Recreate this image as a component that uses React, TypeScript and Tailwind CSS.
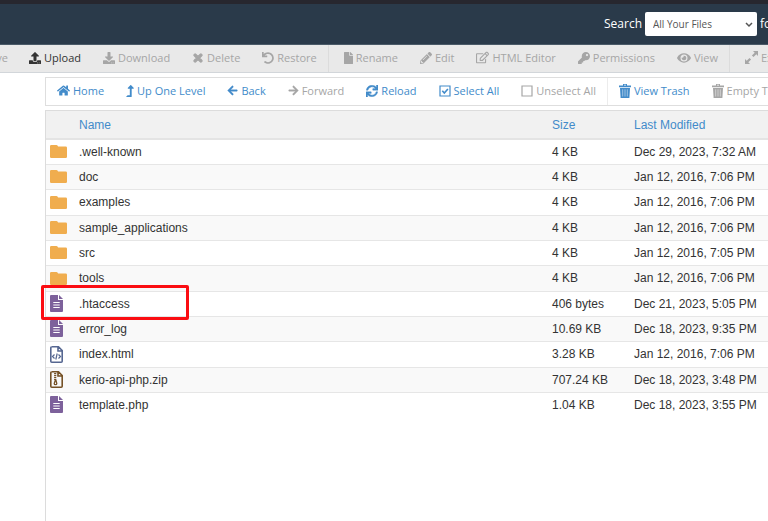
import type { ReactNode } from "react";
import {
  FaUpload, FaDownload, FaUndo, FaFile, FaPencilAlt, FaKey, FaEye, FaLevelUpAlt,
  FaArrowLeft, FaArrowRight, FaSync, FaRegEdit, FaHome, FaTimes,
} from "react-icons/fa";

const Trash = () => (
  <svg viewBox="0 0 12 14" className="h-[14px] w-3" fill="currentColor" aria-hidden="true">
    <path fillRule="evenodd" d="M4 0h4v1.500h4v1.700H0V1.500h4zM5 .8v.8h2V.8z" />
    <path d="M1 4h10l-.6 10H1.600z" />
    <path d="M3.700 5.300v7.200M6 5.300v7.200M8.300 5.300v7.200" stroke="#fff" strokeWidth=".7" opacity=".7" />
  </svg>
);

const Checkbox = ({ checked }: { checked?: boolean }) => (
  <svg viewBox="0 0 12 12" className="size-3" fill="none" stroke="currentColor" aria-hidden="true">
    <path d="M1 1h10v10H1z" strokeWidth="1.200" />
    {checked && <path d="M3.300 5.800l2 2.200 3.600-4" strokeWidth="1.600" />}
  </svg>
);

const Expand = () => (
  <svg viewBox="0 0 13 13" className="size-[13px]" fill="currentColor" aria-hidden="true">
    <path d="M8 0h5v5l-1.700-1.700-2.800 2.800-1.600-1.600 2.800-2.800zM5 13H0V8l1.700 1.700 2.800-2.800 1.600 1.600-2.800 2.800z" />
  </svg>
);

const Folder = () => (
  <svg viewBox="0 0 17 13" className="h-[13px] w-[17px]" fill="#f0ad4e" aria-hidden="true">
    <path d="M1.300 0h5.200q.6 0 1 .6l.6 .9h7.600Q17 1.500 17 2.800v8.900q0 1.300-1.300 1.300H1.300Q0 13 0 11.700V1.300Q0 0 1.300 0z" />
  </svg>
);

const TextFile = () => (
  <svg viewBox="0 0 13 17" className="h-[17px] w-[13px]" aria-hidden="true">
    <path d="M1 0h7v5h5v11q0 1-1 1H1q-1 0-1-1V1q0-1 1-1zM9 0l4 4H9z" fill="#7d619b" />
    <path d="M3.300 7.500h6.400M3.300 10h6.400M3.300 12.500h6.400" stroke="#fff" strokeWidth="1.100" />
  </svg>
);

const HtmlFile = () => (
  <svg viewBox="0 0 13 17" className="h-[17px] w-[13px]" fill="none" stroke="#566791" aria-hidden="true">
    <path d="M1.700.8h6.800l3.700 3.700v10.700q0 1-1 1H1.800q-1 0-1-1V1.800q0-1 1-1zM8 1v4h4" strokeWidth="1.600" />
    <path d="M4.500 8.500l-2 2 2 2M8.500 8.500l2 2-2 2M7.200 7.500l-1.400 6" strokeWidth="1.200" />
  </svg>
);

const ZipFile = () => (
  <svg viewBox="0 0 13 17" className="h-[17px] w-[13px]" fill="none" stroke="#755126" aria-hidden="true">
    <path d="M1.700.8h6.800l3.700 3.700v10.700q0 1-1 1H1.800q-1 0-1-1V1.800q0-1 1-1zM8 1v4h4" strokeWidth="1.600" />
    <path d="M5.200 2v7" strokeWidth="2.200" strokeDasharray="1.200 .8" />
    <path d="M5.200 9.500l-1 3q0 1.200 1.300 1.200t1.300-1.200l-.8-3z" strokeWidth="1.300" />
  </svg>
);

type Item = { label: string; icon?: ReactNode; active?: boolean; divider?: boolean };

const mainTools: Item[] = [
  { label: "Upload", icon: <FaUpload size={12} />, active: true },
  { label: "Download", icon: <FaDownload size={12} /> },
  { label: "Delete", icon: <FaTimes size={12} stroke="currentColor" strokeWidth={50} /> },
  { label: "Restore", icon: <FaUndo size={12} />, divider: true },
  { label: "Rename", icon: <FaFile size={12} className="w-[9px]" /> },
  { label: "Edit", icon: <FaPencilAlt size={12} /> },
  { label: "HTML Editor", icon: <FaRegEdit size={13} /> },
  { label: "Permissions", icon: <FaKey size={12} /> },
  { label: "View", icon: <FaEye size={14} />, divider: true },
  { label: "Extract", icon: <Expand /> },
];

const navTools: Item[] = [
  { label: "Home", icon: <FaHome size={13} />, active: true },
  { label: "Up One Level", icon: <FaLevelUpAlt size={12} className="w-2" />, active: true },
  { label: "Back", icon: <FaArrowLeft size={11} stroke="currentColor" strokeWidth={16} />, active: true },
  { label: "Forward", icon: <FaArrowRight size={11} stroke="currentColor" strokeWidth={16} /> },
  { label: "Reload", icon: <FaSync size={12} stroke="currentColor" strokeWidth={16} />, active: true },
  { label: "Select All", icon: <Checkbox checked />, active: true },
  { label: "Unselect All", icon: <Checkbox />, divider: true },
  { label: "View Trash", icon: <Trash />, active: true },
  { label: "Empty Trash", icon: <Trash /> },
];

const files = [
  [".well-known", "4 KB", "Dec 29, 2023, 7:32 AM", "dir"],
  ["doc", "4 KB", "Jan 12, 2016, 7:06 PM", "dir"],
  ["examples", "4 KB", "Jan 12, 2016, 7:06 PM", "dir"],
  ["sample_applications", "4 KB", "Jan 12, 2016, 7:06 PM", "dir"],
  ["src", "4 KB", "Jan 12, 2016, 7:05 PM", "dir"],
  ["tools", "4 KB", "Jan 12, 2016, 7:06 PM", "dir"],
  [".htaccess", "406 bytes", "Dec 21, 2023, 5:05 PM", "text"],
  ["error_log", "10.69 KB", "Dec 18, 2023, 9:35 PM", "text"],
  ["index.html", "3.28 KB", "Jan 12, 2016, 7:06 PM", "html"],
  ["kerio-api-php.zip", "707.24 KB", "Dec 18, 2023, 3:48 PM", "zip"],
  ["template.php", "1.04 KB", "Dec 18, 2023, 3:55 PM", "text"],
];

const icons: Record<string, ReactNode> = { dir: <Folder />, text: <TextFile />, html: <HtmlFile />, zip: <ZipFile /> };

function Tool({ item, activeClass, dividerClass }: { item: Item; activeClass: string; dividerClass: string }) {
  return (
    <button
      type="button"
      disabled={!item.active}
      className={`flex shrink-0 items-center gap-[3px] px-[11px] pb-0.5 ${item.active ? activeClass : "text-[#a6a6a6]"} ${item.divider ? dividerClass : ""}`}
    >
      {item.icon}
      <span>{item.label}</span>
    </button>
  );
}

export default function App() {
  return (
    <div className="flex min-h-screen flex-col overflow-hidden bg-white font-['Open_Sans',sans-serif] text-[11px] leading-4 whitespace-nowrap">
      <header className="flex h-[45px] items-center justify-end overflow-hidden border-t-4 border-b border-t-[#27272f] border-b-[#4a5a68] bg-[#2a3a4a] text-[12px] text-white">
        <label htmlFor="scope" className="mr-[3px]">Search</label>
        <div className="relative">
          <select id="scope" className="h-6 w-[112px] appearance-none rounded-xs bg-white pl-2 text-[10px] text-[#555]">
            <option>All Your Files</option>
          </select>
          <svg viewBox="0 0 8 6" className="pointer-events-none absolute top-[10px] right-1 h-[6px] w-2" fill="none" stroke="#555" strokeWidth="1.500" aria-hidden="true">
            <path d="M1 1l3 3 3-3" />
          </svg>
        </div>
        <span className="ml-[3px] w-2 overflow-hidden">for</span>
      </header>

      <nav aria-label="File actions" className="flex h-7 overflow-hidden border-b border-[#d2d6da] bg-[#e9e9e9]">
        <button type="button" disabled className="flex w-[18px] shrink-0 items-center justify-end pr-[10px] pb-0.5 text-[#a6a6a6]">ve</button>
        {mainTools.map((t) => <Tool key={t.label} item={t} activeClass="text-[#333]" dividerClass="mr-1 border-r border-[#dcdcdc]" />)}
      </nav>

      <main className="flex grow flex-col gap-1 pt-1 pl-[45px]">
        <nav aria-label="Navigation" className="flex h-[29px] overflow-hidden border border-r-0 border-[#dedede]">
          {navTools.map((t) => <Tool key={t.label} item={t} activeClass="text-[#428bca]" dividerClass="border-r border-[#ececec]" />)}
        </nav>
        <section className="grow border-t border-l border-[#dcdcdc] font-['Liberation_Sans',Arial,sans-serif]">
          <table className="w-full table-fixed border-collapse text-left text-[12px] text-[#333]">
            <thead>
              <tr className="h-7 border-b-2 border-[#e4e4e4] bg-[#f1f1f1] text-[#428bca]">
                <th className="w-[33px]"><span className="sr-only">Type</span></th>
                <th className="font-normal">Name</th>
                <th className="w-[82px] font-normal">Size</th>
                <th className="w-[134px] font-normal">Last Modified</th>
              </tr>
            </thead>
            <tbody>
              {files.map(([name, size, date, type]) => (
                <tr key={name} className="h-[25px] border-b border-[#e6e6e6] last:border-0 odd:bg-white even:bg-[#f9f9f9] nth-[3n]:h-[26px]">
                  <td className="pl-1">{icons[type]}</td>
                  <td>
                    {name === ".htaccess" ? (
                      <span className="relative">
                        {name}
                        <span className="pointer-events-none absolute -top-3 -left-[38px] h-[35px] w-[148px] rounded-xs border-3 border-[#fb0d12]" />
                      </span>
                    ) : name}
                  </td>
                  <td>{size}</td>
                  <td>{date}</td>
                </tr>
              ))}
            </tbody>
          </table>
        </section>
      </main>
    </div>
  );
}
